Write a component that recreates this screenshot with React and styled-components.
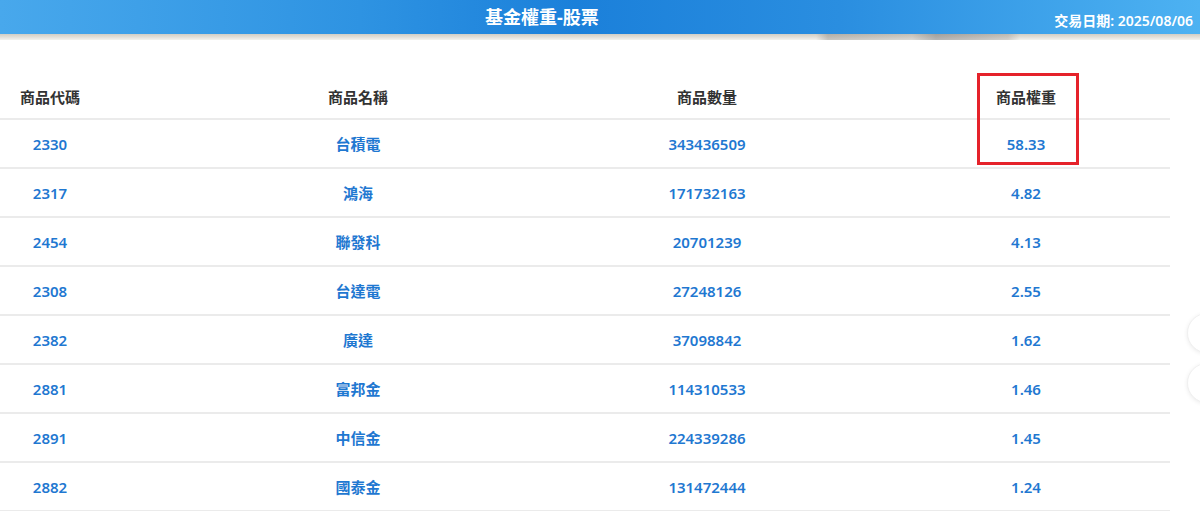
import React from "react";
import styled, { createGlobalStyle } from "styled-components";

const GlobalStyle = createGlobalStyle`
  html, body {
    margin: 0;
    padding: 0;
    background: #fff;
    font-family: "Noto Sans", "Noto Sans CJK TC", sans-serif;
    overflow: hidden;
  }
`;

const Page = styled.div`
  position: relative;
  width: 1200px;
  height: 511px;
  overflow: hidden;
`;

const TopBar = styled.div`
  display: flex;
  align-items: center;
  height: 34px;
  background: linear-gradient(
    90deg,
    #48a8ec 0%,
    #2e93e2 30%,
    #1b80da 48%,
    #2a8ee0 70%,
    #4db2f2 100%
  );
  color: #fff;
`;

const Title = styled.h1`
  margin: 0 0 0 485px;
  font-size: 18px;
  font-weight: 700;
  line-height: 1;
  letter-spacing: 0;
`;

const TradeDate = styled.div`
  margin-left: auto;
  padding: 6px 7px 0 0;
  font-size: 14px;
  font-weight: 600;
`;

const Strip = styled.div`
  height: 6px;
  background:
    linear-gradient(90deg, transparent 0%, transparent 68%, rgba(120,115,110,.35) 69%, rgba(150,145,140,.25) 76%, rgba(90,90,95,.4) 78%, rgba(140,135,130,.3) 84%, transparent 85%, transparent 100%),
    linear-gradient(180deg, #d2cec4 0%, #e2dfd8 50%, #f4f3ef 100%);
`;

const Table = styled.div`
  width: 1170px;
  margin-top: 34px;
`;

const Row = styled.div`
  display: grid;
  grid-template-columns: 100px 516px 182px 372px;
  align-items: center;
  height: ${(p) => (p.$head ? "44px" : "47px")};
  border-bottom: 2px solid #ebebeb;
`;

const Cell = styled.div`
  text-align: center;
  font-size: 15px;
  font-weight: ${(p) => (p.$head ? 700 : 600)};
  color: ${(p) => (p.$head ? "#333" : "#1f78d1")};
  padding-left: ${(p) => (p.$last ? "84px" : "0")};
  white-space: nowrap;
`;

const Highlight = styled.div`
  position: absolute;
  left: 977px;
  top: 73px;
  width: 96px;
  height: 86px;
  border: 3px solid #e5222a;
  pointer-events: none;
`;

const FloatBtn = styled.div`
  position: absolute;
  left: 1187px;
  top: ${(p) => p.$top}px;
  width: 38px;
  height: 38px;
  border-radius: 50%;
  background: #fff;
  border: 1px solid #f0f0f0;
  box-shadow: 0 1px 4px rgba(0, 0, 0, 0.08);
`;

const rows = [
  ["2330", "台積電", "343436509", "58.33"],
  ["2317", "鴻海", "171732163", "4.82"],
  ["2454", "聯發科", "20701239", "4.13"],
  ["2308", "台達電", "27248126", "2.55"],
  ["2382", "廣達", "37098842", "1.62"],
  ["2881", "富邦金", "114310533", "1.46"],
  ["2891", "中信金", "224339286", "1.45"],
  ["2882", "國泰金", "131472444", "1.24"],
];

export default function App() {
  return (
    <Page>
      <GlobalStyle />
      <TopBar>
        <Title>基金權重-股票</Title>
        <TradeDate>交易日期: 2025/08/06</TradeDate>
      </TopBar>
      <Strip />
      <Table>
        <Row $head>
          <Cell $head>商品代碼</Cell>
          <Cell $head>商品名稱</Cell>
          <Cell $head>商品數量</Cell>
          <Cell $head $last>商品權重</Cell>
        </Row>
        {rows.map((r) => (
          <Row key={r[0]}>
            <Cell>{r[0]}</Cell>
            <Cell>{r[1]}</Cell>
            <Cell>{r[2]}</Cell>
            <Cell $last>{r[3]}</Cell>
          </Row>
        ))}
      </Table>
      <Highlight />
      <FloatBtn $top={313} />
      <FloatBtn $top={363} />
    </Page>
  );
}
